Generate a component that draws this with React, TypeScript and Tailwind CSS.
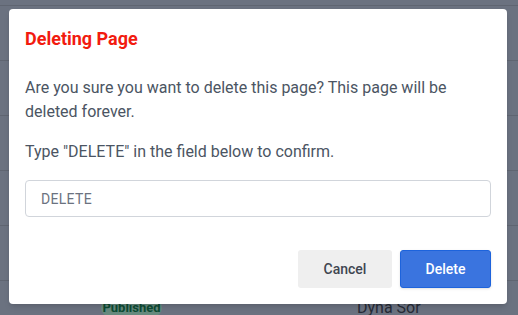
export default function App() {
  const rows = [0, 1, 2, 3, 4]
  return (
    <div className="relative w-[518px] h-[315px] overflow-hidden bg-[#6b7280] font-['Roboto',sans-serif]">
      {/* dimmed table behind the dialog */}
      <div className="pt-[5px]">
        {rows.map((r) => (
          <div key={r} className="h-[55px] border-t border-[#5f6571]" />
        ))}
        <div className="h-[55px] border-t border-[#5f6571] flex items-center">
          <span className="ml-[101px] w-[61px] h-[16px] rounded-full bg-[#678a7e] text-[13px] leading-[16px] font-bold text-[#0d4a33] text-center">
            Published
          </span>
          <span className="ml-[195px] text-[16px] text-[#262b36]">Dyna Sor</span>
        </div>
      </div>

      {/* dialog */}
      <div className="absolute left-[9px] top-[9px] w-[498px] h-[295px] bg-white rounded-[4px] shadow-md px-4 pt-4 pb-4 flex flex-col">
        <h2 className="text-[18px] leading-[28px] font-bold text-[#f21b0f]">Deleting Page</h2>
        <p className="mt-[23px] text-[16px] leading-[24px] text-[#4b5563]">
          Are you sure you want to delete this page? This page will be deleted forever.
        </p>
        <p className="mt-4 text-[16px] leading-[24px] text-[#4b5563]">
          Type "DELETE" in the field below to confirm.
        </p>
        <input
          readOnly
          value="DELETE"
          className="mt-4 h-[37px] w-full rounded-[4px] border border-[#d1d5db] px-[15px] text-[14px] tracking-[0.3px] text-[#6b7280] outline-none"
        />
        <div className="mt-auto flex justify-end gap-2">
          <button className="w-[94px] h-[38px] rounded-[3px] bg-[#efefef] text-[14px] font-medium text-[#3f4651]">
            Cancel
          </button>
          <button className="w-[91px] h-[38px] rounded-[3px] bg-[#3a74df] border border-[#1d63dc] text-[14px] font-medium text-white shadow-sm">
            Delete
          </button>
        </div>
      </div>
    </div>
  )
}
